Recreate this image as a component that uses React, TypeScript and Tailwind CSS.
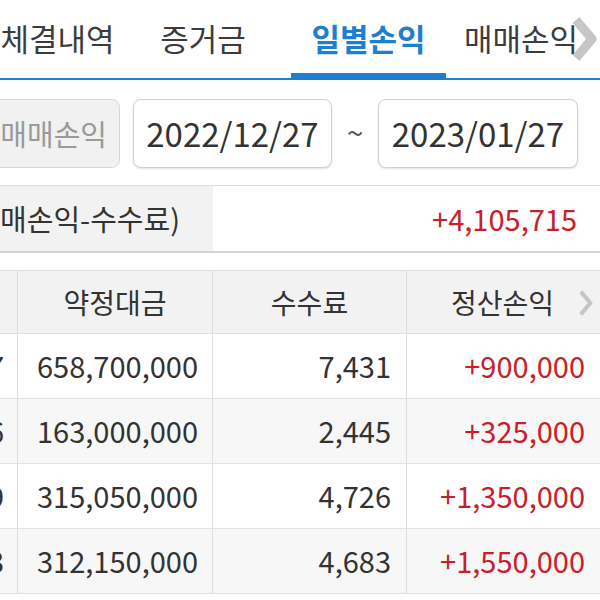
const tabs = [
  { label: "체결내역", w: "w-[145px] -ml-[15px]" },
  { label: "증거금", w: "w-[146px]" },
  { label: "일별손익", w: "w-[155px] ml-[15px]", active: true },
  { label: "매매손익", w: "w-[150px]" },
];

const rows = [
  { date: "01/27", amount: "658,700,000", fee: "7,431", pnl: "+900,000" },
  { date: "01/26", amount: "163,000,000", fee: "2,445", pnl: "+325,000" },
  { date: "01/19", amount: "315,050,000", fee: "4,726", pnl: "+1,350,000" },
  { date: "01/13", amount: "312,150,000", fee: "4,683", pnl: "+1,550,000" },
];

const Chevron = ({ className, stroke }: { className: string; stroke: number }) => (
  <svg viewBox="0 0 30 50" className={className} fill="none">
    <polyline points="8,6 24,25 8,44" stroke="#c6c6c6" strokeWidth={stroke} strokeLinejoin="round" />
  </svg>
);

export default function App() {
  return (
    <div className="relative h-[600px] w-[600px] overflow-hidden bg-white text-[#333] font-['Noto_Sans_CJK_KR',sans-serif]">
      {/* tabs */}
      <div className="relative border-b-2 border-[#1e7fd0]">
        <div className="flex h-[78px]">
          {tabs.map((t) => (
            <div
              key={t.label}
              className={`${t.w} relative flex shrink-0 items-center justify-center pb-[2px] text-[31px] ${
                t.active ? "font-bold text-[#1e7fd0]" : "text-[#3c3c3c]"
              }`}
            >
              {t.label}
              {t.active && <div className="absolute bottom-0 left-0 right-0 h-[5px] bg-[#1e7fd0]" />}
            </div>
          ))}
        </div>
        <Chevron className="absolute left-[568px] top-[14px] h-[50px] w-[30px]" stroke={9} />
      </div>

      {/* date range */}
      <div className="mt-[19px] flex h-[69px] items-stretch">
        <div className="-ml-[16px] flex w-[136px] items-center justify-end rounded-[8px] border border-[#d6d6d6] bg-[#f1f1f1] pr-[12px] text-[29px] text-[#9a9a9a]">
          매매손익
        </div>
        <div className="ml-[13px] flex w-[199px] items-center justify-center rounded-[8px] border border-[#d0d0d0] bg-white text-[33px] text-[#333] shadow-[0_1px_2px_rgba(0,0,0,0.12)]">
          2022/12/27
        </div>
        <div className="flex w-[46px] items-center justify-center pb-[4px] text-[30px] text-[#555]">~</div>
        <div className="flex w-[200px] items-center justify-center rounded-[8px] border border-[#d0d0d0] bg-white text-[33px] text-[#333] shadow-[0_1px_2px_rgba(0,0,0,0.12)]">
          2023/01/27
        </div>
      </div>

      {/* summary */}
      <div className="mt-[17px] flex h-[68px] border-t border-b-2 border-t-[#dcdcdc] border-b-[#d4d4d4]">
        <div className="flex w-[213px] items-center justify-end bg-[#f2f2f2] pr-[33px] text-[29px] whitespace-nowrap">
          (매매손익-수수료)
        </div>
        <div className="flex flex-1 items-center justify-end pr-[23px] text-[29px] text-[#c8202a]">+4,105,715</div>
      </div>

      {/* table */}
      <div className="mt-[17px] -ml-[162px] w-[762px] border-t border-[#dedede] text-[29px]">
        <div className="flex h-[63px] border-b border-[#dedede] bg-[#f2f2f2] text-[28px]">
          <div className="w-[180px] border-r border-[#dedede]" />
          <div className="flex w-[195px] items-center justify-center border-r border-[#dedede]">약정대금</div>
          <div className="flex w-[194px] items-center justify-center border-r border-[#dedede]">수수료</div>
          <div className="relative flex w-[193px] items-center justify-center pr-[2px]">
            정산손익
            <Chevron className="absolute right-[6px] top-[17px] h-[30px] w-[18px]" stroke={7} />
          </div>
        </div>
        {rows.map((r, i) => (
          <div
            key={r.date}
            className={`flex h-[65px] border-b border-[#e2e2e2] ${i % 2 === 1 ? "bg-[#f7f7f7]" : "bg-white"}`}
          >
            <div className="flex w-[180px] items-center justify-end border-r border-[#dedede] pr-[13px]">{r.date}</div>
            <div className="flex w-[195px] items-center justify-end border-r border-[#dedede] pr-[14px]">{r.amount}</div>
            <div className="flex w-[194px] items-center justify-end border-r border-[#dedede] pr-[15px]">{r.fee}</div>
            <div className="flex w-[193px] items-center justify-end pr-[15px] text-[#c8202a]">{r.pnl}</div>
          </div>
        ))}
      </div>
    </div>
  );
}
